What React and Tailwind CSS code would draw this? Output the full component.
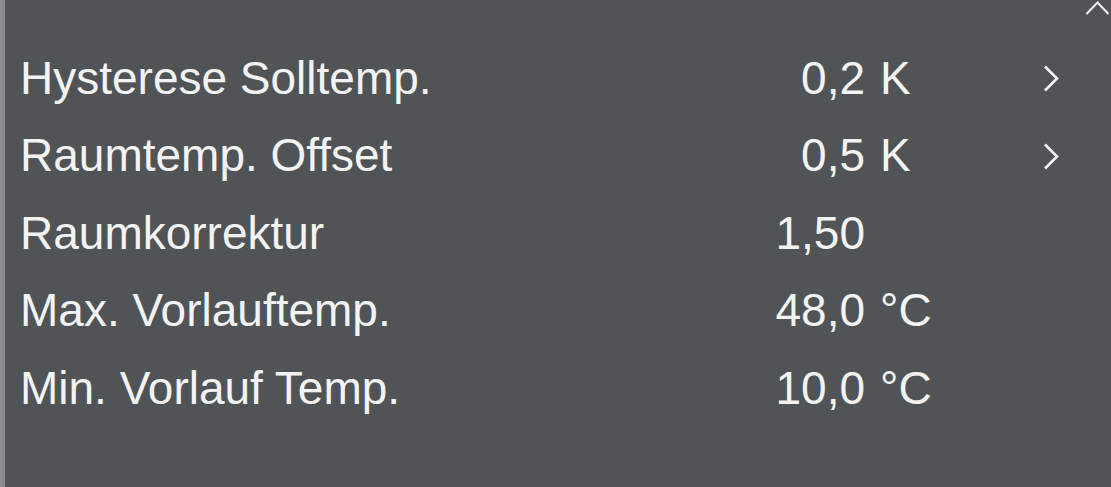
import React from 'react';

// settings rows: label, value, unit, has detail page
const rows = [
  { label: 'Hysterese Solltemp.', value: '0,2', unit: 'K', more: true },
  { label: 'Raumtemp. Offset', value: '0,5', unit: 'K', more: true },
  { label: 'Raumkorrektur', value: '1,50', unit: '', more: false },
  { label: 'Max. Vorlauftemp.', value: '48,0', unit: '°C', more: false },
  { label: 'Min. Vorlauf Temp.', value: '10,0', unit: '°C', more: false },
];

function Chevron() {
  return (
    <svg width="16" height="27" viewBox="0 0 16 27" fill="none" className="text-[#f2f2f2] mt-[2px]">
      <path d="M2 1.5 L14 13.5 L2 25.5" stroke="currentColor" strokeWidth="2.6" />
    </svg>
  );
}

export default function App() {
  return (
    <div
      className="relative w-[1111px] h-[487px] bg-[#515457] border-l-[5px] border-[#8b8b8b] text-[#f3f3f3] overflow-hidden"
      style={{ fontFamily: '"Liberation Sans", Arial, sans-serif' }}
    >
      <svg width="26" height="16" viewBox="0 0 26 16" fill="none" className="absolute top-0 right-0 text-[#f2f2f2]">
        <path d="M1.5 14 L12.5 2.5 L23.5 14" stroke="currentColor" strokeWidth="2" />
      </svg>

      <div className="flex flex-col pt-[39px] pl-[15px]">
        {rows.map((r) => (
          <div key={r.label} className="flex items-center h-[77.5px] text-[46px] leading-none">
            <span className="w-[705px] whitespace-nowrap">{r.label}</span>
            <span className="w-[140px] text-right">{r.value}</span>
            <span className="w-[178px] pl-[15px] whitespace-nowrap">{r.unit}</span>
            <span className="flex w-[20px] items-center">{r.more && <Chevron />}</span>
          </div>
        ))}
      </div>
    </div>
  );
}
